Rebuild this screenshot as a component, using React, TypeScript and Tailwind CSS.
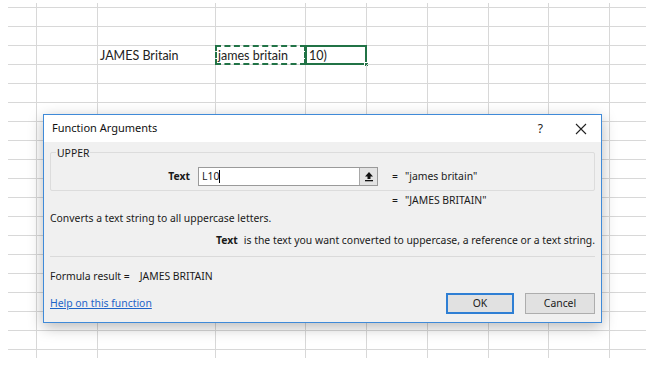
import { useState } from "react";

const colWidths = [29, 61, 118, 90, 61, 61, 61, 60, 61, 36];
const rowHeights = [5, ...Array(18).fill(19), 8];

const sheetFont = { fontFamily: "Lato, 'Open Sans', sans-serif" };
const uiFont = { fontFamily: "'Noto Sans', 'Open Sans', sans-serif" };

const Cell = ({ row, col }: { row: number; col: number }) => {
  const lastRow = row === rowHeights.length - 1;
  const lastCol = col === colWidths.length - 1;
  const cls = [
    "relative box-border",
    lastRow ? "" : "border-b border-[#d8d8d8]",
    lastCol ? "" : "border-r border-[#d8d8d8]",
  ].join(" ");

  // row 3 holds the text cells
  if (row === 3 && col === 2) {
    return (
      <div className={cls}>
        <span className="absolute left-[2px] top-[1px] text-[12.5px] text-[#222]">JAMES Britain</span>
      </div>
    );
  }
  if (row === 3 && col === 3) {
    return (
      <div className={cls}>
        <div className="absolute -left-[1px] -top-[1px] -right-[1px] -bottom-[1px] border-2 border-dashed border-[#217346]" />
        <span className="absolute left-[2px] top-[1px] text-[12.5px] text-[#222]">james britain</span>
      </div>
    );
  }
  if (row === 3 && col === 4) {
    return (
      <div className={cls}>
        <div className="absolute -left-[1px] -top-[1px] -right-[1px] -bottom-[1px] border-2 border-[#217346]" />
        <div className="absolute -right-[3px] -bottom-[3px] w-[5px] h-[5px] bg-[#217346] border border-white" />
        <span className="absolute left-[3px] top-[1px] text-[12.5px] text-[#222]">10)</span>
      </div>
    );
  }
  return <div className={cls} />;
};

const UploadIcon = () => (
  <svg width="10" height="11" viewBox="0 0 10 11">
    <path d="M5 1 L1 5.5 H3.5 V8 H6.5 V5.5 H9 Z" fill="#111" />
    <rect x="1" y="9" width="8" height="1.3" fill="#111" />
  </svg>
);

const CloseIcon = () => (
  <svg width="12" height="12" viewBox="0 0 12 12">
    <path d="M1 1 L11 11 M11 1 L1 11" stroke="#222" strokeWidth="1.1" />
  </svg>
);

export default function App() {
  const [value] = useState("L10");

  return (
    <div className="relative w-[650px] h-[365px] bg-white overflow-hidden">
      <div className="pt-[3px] pl-[8px]" style={sheetFont}>
        <div
          className="grid"
          style={{
            gridTemplateColumns: colWidths.map((w) => `${w}px`).join(" "),
            gridTemplateRows: rowHeights.map((h) => `${h}px`).join(" "),
          }}
        >
          {rowHeights.map((_, r) =>
            colWidths.map((_, c) => <Cell key={`${r}-${c}`} row={r} col={c} />)
          )}
        </div>
      </div>

      <div
        className="absolute left-[43px] top-[114px] w-[559px] h-[209px] border border-[#3f8ad8] bg-[#f0f0f0] shadow-[0_4px_14px_rgba(0,0,0,0.28)] flex flex-col text-[10.4px] text-[#1a1a1a] whitespace-nowrap"
        style={uiFont}
      >
        <div className="h-[27px] bg-white flex items-center pl-[8px] pr-[14px] shrink-0">
          <span className="text-[11px] text-[#111]">Function Arguments</span>
          <span className="ml-auto text-[12px] text-[#222] mr-[32px]">?</span>
          <CloseIcon />
        </div>

        <div className="flex flex-col px-[6px] pt-[10px]">
          <div className="relative h-[39px] border border-[#dcdcdc] rounded-[2px]">
            <span className="absolute -top-[8px] left-[5px] px-[1px] bg-[#f0f0f0] leading-[16px]">UPPER</span>
            <div className="flex items-center mt-[14px] h-[19px]">
              <span className="w-[147px] text-right font-bold pr-[8px]">Text</span>
              <div className="flex h-[19px] w-[180px] border border-[#9a9a9a] bg-white">
                <div className="flex-1 flex items-center pl-[3px]">
                  <span>{value}</span>
                  <span className="w-px h-[13px] bg-black" />
                </div>
                <div className="w-[18px] flex items-center justify-center bg-[#e3e3e3] border-l border-[#a8a8a8]">
                  <UploadIcon />
                </div>
              </div>
              <span className="ml-[14px] w-[13px]">=</span>
              <span>"james britain"</span>
            </div>
          </div>

          <div className="flex h-[20px] items-center pl-[342px]">
            <span className="w-[13px]">=</span>
            <span>"JAMES BRITAIN"</span>
          </div>

          <div className="h-[12px] mt-[2px] flex items-center">Converts a text string to all uppercase letters.</div>

          <div className="h-[30px] mt-[1px] flex items-center pl-[166px]">
            <span className="font-bold w-[29px]">Text</span>
            <span>is the text you want converted to uppercase, a reference or a text string.</span>
          </div>

          <div className="h-px bg-[#dadada]" />

          <div className="h-[35px] pt-[5px] flex items-center">
            <span>Formula result =</span>
            <span className="ml-[10px]">JAMES BRITAIN</span>
          </div>

          <div className="flex items-center mt-[1px]">
            <a className="text-[#1e64c8] underline mt-[1px]">Help on this function</a>
            <button className="ml-auto w-[68px] h-[21px] border-2 border-[#2f7fd4] bg-[#e1e1e1] text-[10.4px]">OK</button>
            <button className="ml-[11px] w-[70px] h-[21px] border border-[#adadad] bg-[#e1e1e1] text-[10.4px]">Cancel</button>
          </div>
        </div>
      </div>
    </div>
  );
}
